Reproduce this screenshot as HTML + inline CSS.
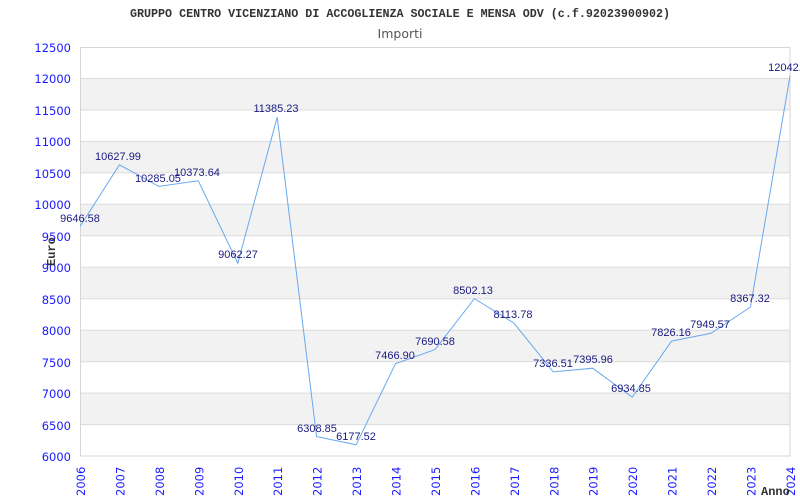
<!DOCTYPE html>
<html><head><style>body{margin:0;background:#fff}svg{display:block}</style></head><body>
<svg width="800" height="500" xmlns="http://www.w3.org/2000/svg">
<rect width="800" height="500" fill="#fff"/>
<g fill="#f2f2f2">
<rect x="80" y="78.5" width="710" height="31.5"/>
<rect x="80" y="141.4" width="710" height="31.5"/>
<rect x="80" y="204.3" width="710" height="31.5"/>
<rect x="80" y="267.3" width="710" height="31.5"/>
<rect x="80" y="330.2" width="710" height="31.5"/>
<rect x="80" y="393.1" width="710" height="31.5"/>
</g>
<g stroke="#dcdcdc" stroke-width="1">
<line x1="80" x2="790" y1="78.5" y2="78.5"/><line x1="80" x2="790" y1="110" y2="110"/>
<line x1="80" x2="790" y1="141.4" y2="141.4"/><line x1="80" x2="790" y1="172.9" y2="172.9"/>
<line x1="80" x2="790" y1="204.3" y2="204.3"/><line x1="80" x2="790" y1="235.8" y2="235.8"/>
<line x1="80" x2="790" y1="267.3" y2="267.3"/><line x1="80" x2="790" y1="298.8" y2="298.8"/>
<line x1="80" x2="790" y1="330.2" y2="330.2"/><line x1="80" x2="790" y1="361.7" y2="361.7"/>
<line x1="80" x2="790" y1="393.1" y2="393.1"/><line x1="80" x2="790" y1="424.6" y2="424.6"/>
<rect x="80.5" y="47.5" width="709.5" height="408.5" fill="none" stroke="#d6d6d6"/>
</g>
<text x="400" y="17" font-family="Liberation Mono,monospace" font-weight="bold" font-size="11.7" fill="#333" text-anchor="middle">GRUPPO CENTRO VICENZIANO DI ACCOGLIENZA SOCIALE E MENSA ODV (c.f.92023900902)</text>
<text x="400" y="38" font-family="DejaVu Sans,sans-serif" font-size="12.5" fill="#555" text-anchor="middle">Importi</text>
<g font-family="DejaVu Sans,sans-serif" font-size="11.5" fill="#1a1aff" text-anchor="end">
<text x="71" y="52">12500</text><text x="71" y="83">12000</text><text x="71" y="115">11500</text>
<text x="71" y="146">11000</text><text x="71" y="178">10500</text><text x="71" y="209">10000</text>
<text x="71" y="241">9500</text><text x="71" y="272">9000</text><text x="71" y="304">8500</text>
<text x="71" y="335">8000</text><text x="71" y="367">7500</text><text x="71" y="398">7000</text>
<text x="71" y="430">6500</text><text x="71" y="461">6000</text>
</g>
<g font-family="DejaVu Sans,sans-serif" font-size="11.5" fill="#1a1aff">
<text transform="translate(85,496) rotate(-90)">2006</text>
<text transform="translate(124.4,496) rotate(-90)">2007</text>
<text transform="translate(163.9,496) rotate(-90)">2008</text>
<text transform="translate(203.3,496) rotate(-90)">2009</text>
<text transform="translate(242.8,496) rotate(-90)">2010</text>
<text transform="translate(282.2,496) rotate(-90)">2011</text>
<text transform="translate(321.6,496) rotate(-90)">2012</text>
<text transform="translate(361.1,496) rotate(-90)">2013</text>
<text transform="translate(400.5,496) rotate(-90)">2014</text>
<text transform="translate(440,496) rotate(-90)">2015</text>
<text transform="translate(479.4,496) rotate(-90)">2016</text>
<text transform="translate(518.8,496) rotate(-90)">2017</text>
<text transform="translate(558.3,496) rotate(-90)">2018</text>
<text transform="translate(597.7,496) rotate(-90)">2019</text>
<text transform="translate(637.2,496) rotate(-90)">2020</text>
<text transform="translate(676.6,496) rotate(-90)">2021</text>
<text transform="translate(716,496) rotate(-90)">2022</text>
<text transform="translate(755.5,496) rotate(-90)">2023</text>
<text transform="translate(794.9,496) rotate(-90)">2024</text>
</g>
<text transform="translate(55,266) rotate(-90)" font-family="Liberation Mono,monospace" font-weight="bold" font-size="12" fill="#333">Euro</text>
<text x="761" y="495" font-family="Liberation Mono,monospace" font-weight="bold" font-size="12" fill="#333">Anno</text>
<polyline fill="none" stroke="#6aa8ee" stroke-width="1" points="80,226.5 119.4,164.8 158.9,186.4 198.3,180.8 237.8,263.3 277.2,117.1 316.6,436.6 356.1,444.8 395.5,363.7 435,349.6 474.4,298.6 513.8,323 553.3,371.9 592.7,368.2 632.2,397.2 671.6,341.1 711,333.3 750.5,307 790,75.8"/>
<g font-family="Liberation Sans,sans-serif" font-size="11" fill="#1a1a80" text-anchor="middle">
<text x="80" y="222">9646.58</text>
<text x="118" y="160">10627.99</text>
<text x="158" y="182">10285.05</text>
<text x="197" y="176">10373.64</text>
<text x="238" y="258">9062.27</text>
<text x="276" y="112">11385.23</text>
<text x="317" y="432">6308.85</text>
<text x="356" y="440">6177.52</text>
<text x="395" y="359">7466.90</text>
<text x="435" y="345">7690.58</text>
<text x="473" y="294">8502.13</text>
<text x="513" y="318">8113.78</text>
<text x="553" y="367">7336.51</text>
<text x="593" y="363">7395.96</text>
<text x="631" y="392">6934.85</text>
<text x="671" y="336">7826.16</text>
<text x="710" y="328">7949.57</text>
<text x="750" y="302">8367.32</text>
<text x="788" y="71">12042.6</text>
</g>
</svg>
</body></html>
